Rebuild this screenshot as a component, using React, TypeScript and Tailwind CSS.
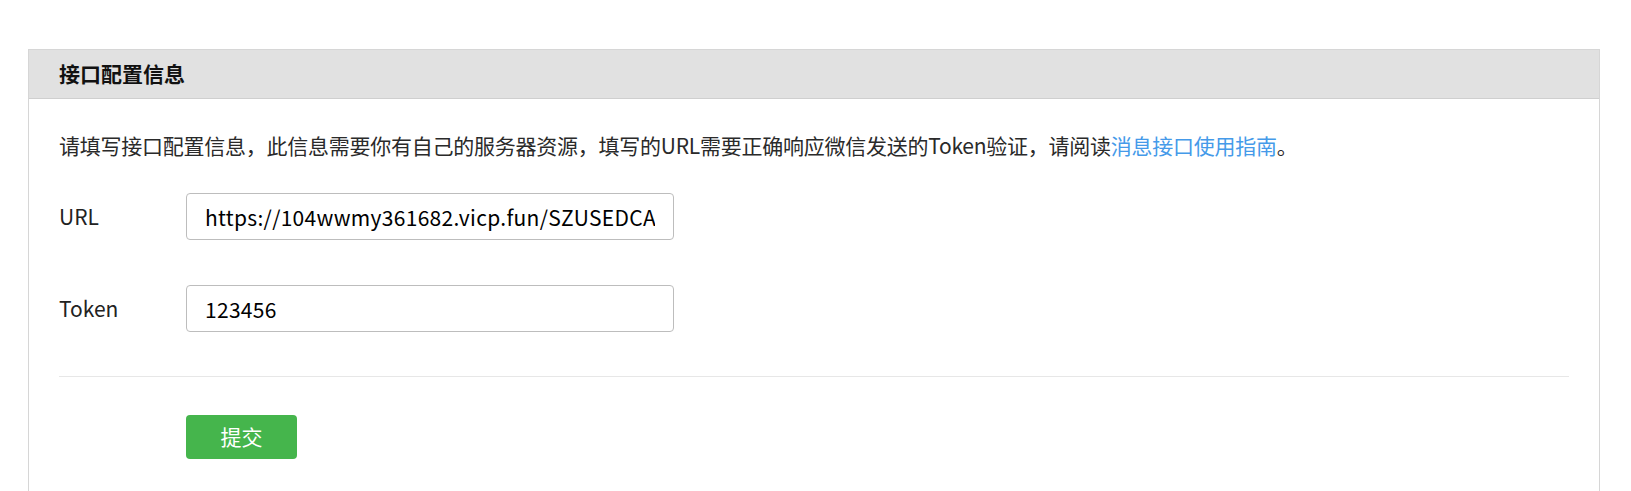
import React from "react";

const fontStack = "font-['Microsoft_YaHei','Noto_Sans_CJK_SC',sans-serif]";

function Field({ label, value }: { label: string; value: string }) {
  return (
    <div className="flex items-center">
      <label className="w-[127px] shrink-0 text-[21px] text-[#222]">{label}</label>
      <input
        readOnly
        value={value}
        className="h-[47px] w-[488px] rounded-[4px] border border-[#bdbdbd] bg-white px-[18px] text-[21px] tracking-[0.3px] text-black outline-none"
      />
    </div>
  );
}

export default function App() {
  return (
    <div className={`min-h-[491px] bg-white pt-[49px] ${fontStack}`}>
      <div className="ml-[28px] mr-[31px] min-h-[442px] border border-b-0 border-[#d6d6d6]">
        <div className="flex h-[49px] items-center border-b border-[#cfcfcf] bg-[#e1e1e1] pl-[30px]">
          <h2 className="text-[21px] font-bold text-[#111]">接口配置信息</h2>
        </div>

        <div className="px-[30px] pt-[31px]">
          <p className="text-[21px] leading-[30px] tracking-[-0.25px] text-[#2a2a2a]">
            请填写接口配置信息，此信息需要你有自己的服务器资源，填写的URL需要正确响应微信发送的Token验证，请阅读
            <a href="#" className="text-[#459ae9]">
              消息接口使用指南
            </a>
            。
          </p>

          <div className="mt-[33px] flex flex-col gap-[45px]">
            <Field label="URL" value="https://104wwmy361682.vicp.fun/SZUSEDCA" />
            <Field label="Token" value="123456" />
          </div>

          <div className="mt-[44px] border-t border-[#e7e7e7]" />

          <div className="pl-[127px] pt-[38px]">
            <button className="h-[44px] w-[111px] rounded-[4px] bg-[#45b54c] text-[21px] text-white">
              提交
            </button>
          </div>
        </div>
      </div>
    </div>
  );
}
